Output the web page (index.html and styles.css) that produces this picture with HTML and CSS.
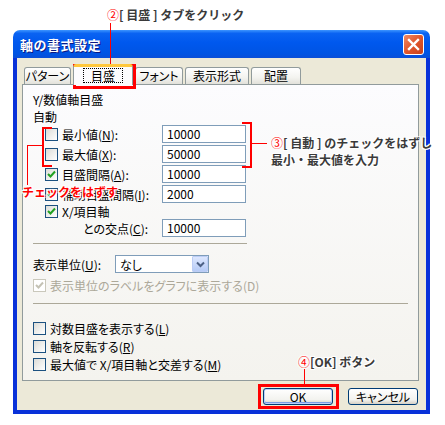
FILE: index.html
```html
<!DOCTYPE html>
<html lang="ja">
<head>
    <meta charset="UTF-8">
    <meta name="viewport" content="width=device-width, initial-scale=1.0">
    <title>軸の書式設定</title>
    <link rel="stylesheet" href="styles.css">
</head>
<body>

<div class="stage">
    <div class="window">
        <div class="titlebar">
            <span class="title">軸の書式設定</span>
            <span class="close">
                <svg width="13" height="13" viewBox="0 0 13 13"><path d="M2 2 L11 11 M11 2 L2 11" stroke="#fff" stroke-width="2.4" stroke-linecap="square"/></svg>
            </span>
        </div>

        <div class="client">
            <div class="tabs">
                <div class="tab t1">パターン</div>
                <div class="tab t2 active"><span class="focus">目盛</span></div>
                <div class="tab t3">フォント</div>
                <div class="tab t4">表示形式</div>
                <div class="tab t5">配置</div>
            </div>

            <div class="panel">
                <div class="line head">Y/数値軸目盛</div>
                <div class="line auto">自動</div>

                <div class="field">
                    <span class="cb"></span>
                    <span class="label">最小値(<u>N</u>):</span>
                    <span class="input">10000</span>
                </div>
                <div class="field">
                    <span class="cb"></span>
                    <span class="label">最大値(<u>X</u>):</span>
                    <span class="input">50000</span>
                </div>
                <div class="field">
                    <span class="cb on"><svg width="11" height="11" viewBox="0 0 11 11"><path d="M2 5 L4.5 7.5 L9 2.5" fill="none" stroke="#21a121" stroke-width="2"/></svg></span>
                    <span class="label">目盛間隔(<u>A</u>):</span>
                    <span class="input">10000</span>
                </div>
                <div class="field">
                    <span class="cb on"><svg width="11" height="11" viewBox="0 0 11 11"><path d="M2 5 L4.5 7.5 L9 2.5" fill="none" stroke="#21a121" stroke-width="2"/></svg></span>
                    <span class="label">補助目盛間隔(<u>I</u>):</span>
                    <span class="input">2000</span>
                </div>
                <div class="line cross-head">
                    <span class="cb on"><svg width="11" height="11" viewBox="0 0 11 11"><path d="M2 5 L4.5 7.5 L9 2.5" fill="none" stroke="#21a121" stroke-width="2"/></svg></span>
                    <span>X/項目軸</span>
                </div>
                <div class="field cross">
                    <span></span>
                    <span class="label">との交点(<u>C</u>):</span>
                    <span class="input">10000</span>
                </div>

                <div class="sep short"></div>

                <div class="unit">
                    <span class="label">表示単位(<u>U</u>):</span>
                    <div class="select">
                        <span>なし</span>
                        <span class="drop"><svg width="9" height="7" viewBox="0 0 9 7"><path d="M1 1.5 L4.5 5 L8 1.5" fill="none" stroke="#4d6185" stroke-width="2"/></svg></span>
                    </div>
                </div>
                <div class="check disabled">
                    <span class="cb"><svg width="11" height="11" viewBox="0 0 11 11"><path d="M2 5 L4.5 7.5 L9 2.5" fill="none" stroke="#c4c2b4" stroke-width="2"/></svg></span>
                    <span>表示単位のラベルをグラフに表示する(D)</span>
                </div>

                <div class="sep"></div>

                <div class="check first">
                    <span class="cb"></span>
                    <span>対数目盛を表示する(<u>L</u>)</span>
                </div>
                <div class="check">
                    <span class="cb"></span>
                    <span>軸を反転する(<u>R</u>)</span>
                </div>
                <div class="check">
                    <span class="cb"></span>
                    <span>最大値で X/項目軸と交差する(<u>M</u>)</span>
                </div>
            </div>

            <div class="buttons">
                <div class="btn default">OK</div>
                <div class="btn">キャンセル</div>
            </div>
        </div>
    </div>

    <!-- 注釈 -->
    <div class="note note-tab"><span class="num">②</span>[ 目盛 ] タブをクリック</div>
    <div class="wire wire-tab"></div>
    <div class="mark mark-tab"></div>

    <div class="note note-auto"><span class="num">③</span>[ 自動 ] のチェックをはずし<br>最小・最大値を入力</div>
    <div class="bracket bracket-right"></div>
    <div class="wire wire-right"></div>

    <div class="bracket bracket-left"></div>
    <div class="wire wire-left-h"></div>
    <div class="wire wire-left-v"></div>
    <div class="note note-uncheck">チェックをはずす</div>

    <div class="note note-ok"><span class="num">④</span>[OK] ボタン</div>
    <div class="wire wire-ok"></div>
    <div class="mark mark-ok"></div>
</div>

</body>
</html>
```

FILE: styles.css
```css
body {
    margin: 0;
    background-color: #fff;
    font-family: "Noto Sans CJK JP", "Noto Sans", sans-serif;
    font-size: 12px;
    color: #000;
}
.stage {
    position: relative;
    width: 445px;
    height: 425px;
    overflow: hidden;
}
.window {
    margin: 30px 0 0 13px;
    width: 417px;
}
.titlebar {
    height: 28px;
    border-radius: 7px 7px 0 0;
    background: linear-gradient(#3d95ff 0, #0a63f2 12%, #0058ee 45%, #0054e3 85%, #0a4ed8 100%);
    display: flex;
    align-items: center;
    justify-content: space-between;
    padding: 0 6px 0 7px;
    box-sizing: border-box;
}
.title {
    color: #fff;
    font-weight: bold;
    font-size: 13px;
    letter-spacing: 0.5px;
    text-shadow: 1px 1px 0 #0a1883;
}
.close {
    width: 21px;
    height: 21px;
    box-sizing: border-box;
    border: 1px solid #fff;
    border-radius: 3px;
    background: linear-gradient(135deg, #f08a66, #e0562c 50%, #c8411c);
    display: flex;
    align-items: center;
    justify-content: center;
}
.client {
    background-color: #ece9d8;
    border: 4px solid #0831d9;
    border-top: none;
    padding: 6px 7px 5px 5px;
}
.tabs {
    display: flex;
    align-items: flex-end;
    gap: 2px;
    height: 20px;
    padding-left: 2px;
}
.tab {
    position: relative;
    height: 17px;
    box-sizing: border-box;
    border: 1px solid #919b9c;
    border-bottom: none;
    border-radius: 3px 3px 0 0;
    background: linear-gradient(#fff, #f3f3ef 60%, #e2e1da);
    text-align: center;
    line-height: 15px;
    font-feature-settings: "palt";
}
.t1 { width: 47px; }
.t2 { width: 60px; }
.t3 { width: 48px; }
.t4 { width: 64px; }
.t5 { width: 50px; }
.tab.active {
    height: 21px;
    margin-bottom: -1px;
    z-index: 1;
    border-top: 3px solid #ffc83c;
    background: #fcfcfe;
    padding-top: 1px;
}
.focus {
    display: inline-block;
    border: 1px dotted #000;
    padding: 0 7px;
    line-height: 13px;
}
.panel {
    position: relative;
    height: 297px;
    box-sizing: border-box;
    border: 1px solid #919b9c;
    background: linear-gradient(#fcfcfe, #f4f3ee);
    padding: 6px 10px 0 10px;
    font-feature-settings: "palt";
}
.line {
    height: 18px;
    line-height: 18px;
}
.auto {
    height: 15px;
    line-height: 15px;
}
.field {
    display: grid;
    grid-template-columns: 13px 96px 84px;
    column-gap: 4px;
    align-items: center;
    height: 20px;
    padding-left: 12px;
}
.cross {
    height: 18px;
}
.cross .label {
    padding-left: 21px;
}
.cross-head {
    display: flex;
    align-items: center;
    gap: 4px;
    height: 15px;
    padding-left: 12px;
}
.cb {
    width: 13px;
    height: 13px;
    box-sizing: border-box;
    border: 1px solid #1c5180;
    background: linear-gradient(135deg, #dcdcd7, #fff);
    display: flex;
    align-items: center;
    justify-content: center;
}
.input {
    height: 18px;
    box-sizing: border-box;
    border: 1px solid #7f9db9;
    background-color: #fff;
    padding-left: 4px;
    line-height: 16px;
}
.sep {
    height: 1px;
    background-color: #aca899;
    margin-top: 9px;
}
.sep.short {
    width: 214px;
    margin-top: 6px;
}
.unit {
    display: flex;
    align-items: center;
    height: 18px;
    margin-top: 11px;
}
.unit .label {
    width: 82px;
}
.select {
    width: 94px;
    height: 18px;
    box-sizing: border-box;
    border: 1px solid #7f9db9;
    background-color: #fff;
    display: flex;
    align-items: center;
    justify-content: space-between;
    padding: 0 0 0 4px;
}
.drop {
    width: 16px;
    height: 16px;
    box-sizing: border-box;
    border: 1px solid #bccdf5;
    border-radius: 1px;
    background: linear-gradient(#dde7fe, #b6cbf6);
    display: flex;
    align-items: center;
    justify-content: center;
}
.check {
    display: flex;
    align-items: center;
    gap: 4px;
    height: 18px;
}
.check.disabled {
    margin-top: 3px;
    color: #aca899;
}
.check.disabled .cb {
    border-color: #cac8bb;
    background: #fff;
}
.check.first {
    margin-top: 15px;
}
.buttons {
    display: flex;
    justify-content: flex-end;
    gap: 15px;
    margin-top: 7px;
    padding-right: 1px;
}
.btn {
    width: 70px;
    height: 17px;
    box-sizing: border-box;
    border: 1px solid #003c74;
    border-radius: 3px;
    background: linear-gradient(#fff, #f3f3ef 70%, #d6d0c5);
    text-align: center;
    line-height: 15px;
    font-feature-settings: "palt";
}
.btn.default {
    box-shadow: inset 0 0 0 1px #bcd0f8, inset 0 -1px 0 1px #7a9be6;
}

/* 注釈 */
.note {
    position: absolute;
    font-weight: bold;
    font-size: 12px;
    color: #3a3a3a;
    line-height: 17px;
    white-space: nowrap;
    text-shadow: -1px -1px 0 #fff, 1px -1px 0 #fff, -1px 1px 0 #fff, 1px 1px 0 #fff;
}
.num {
    color: #f00;
    font-weight: normal;
}
.note-tab {
    left: 107px;
    top: 6px;
}
.note-auto {
    left: 271px;
    top: 134px;
}
.note-ok {
    left: 298px;
    top: 353px;
}
.note-uncheck {
    left: 22px;
    top: 183px;
    color: #f00;
}
.wire {
    position: absolute;
    background-color: #f00;
}
.wire-tab {
    left: 110px;
    top: 23px;
    width: 1px;
    height: 41px;
}
.wire-ok {
    left: 304px;
    top: 369px;
    width: 1px;
    height: 15px;
}
.wire-right {
    left: 252px;
    top: 143px;
    width: 15px;
    height: 1px;
}
.wire-left-h {
    left: 27px;
    top: 145px;
    width: 15px;
    height: 1px;
}
.wire-left-v {
    left: 27px;
    top: 145px;
    width: 1px;
    height: 40px;
}
.mark {
    position: absolute;
    border: 3px solid #f00;
    box-sizing: border-box;
}
.mark-tab {
    left: 73px;
    top: 64px;
    width: 63px;
    height: 25px;
}
.mark-ok {
    left: 258px;
    top: 384px;
    width: 81px;
    height: 25px;
}
.bracket {
    position: absolute;
    width: 8px;
    border: 2px solid #f00;
}
.bracket-right {
    left: 242px;
    top: 122px;
    height: 42px;
    border-left: none;
}
.bracket-left {
    left: 42px;
    top: 127px;
    height: 36px;
    border-right: none;
}
```
